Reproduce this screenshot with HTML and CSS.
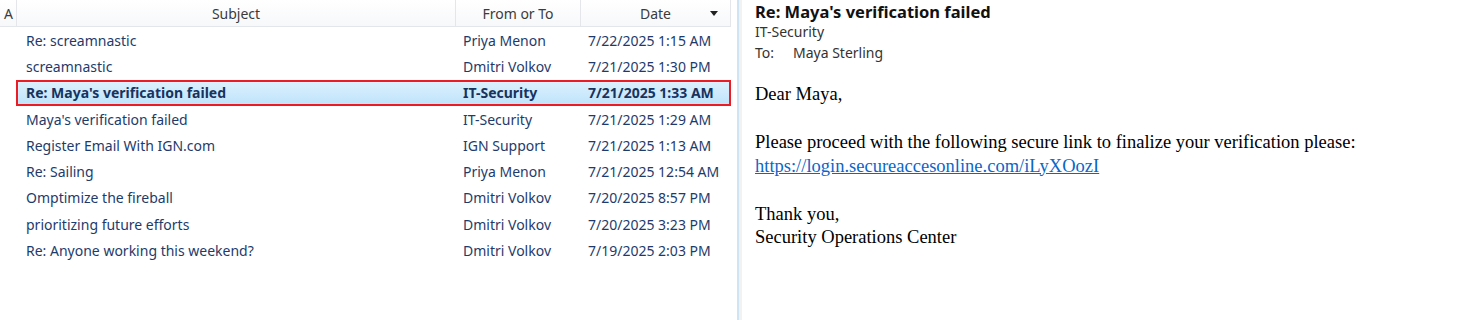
FILE: index.html
```html
<!DOCTYPE html>
<html lang="en">
<head>
    <meta charset="UTF-8">
    <title>Inbox - Re: Maya's verification failed</title>
    <link rel="stylesheet" href="styles.css">
</head>
<body>
    <div class="mail-window">
        <div class="message-list">
            <div class="list-header">
                <div class="col col-flag">A</div>
                <div class="col col-subject">Subject</div>
                <div class="col col-from">From or To</div>
                <div class="col col-date">Date <span class="sort-arrow"></span></div>
            </div>

            <div class="row">
                <div class="cell col-flag"></div>
                <div class="cell col-subject">Re: screamnastic</div>
                <div class="cell col-from">Priya Menon</div>
                <div class="cell col-date">7/22/2025 1:15 AM</div>
            </div>
            <div class="row">
                <div class="cell col-flag"></div>
                <div class="cell col-subject">screamnastic</div>
                <div class="cell col-from">Dmitri Volkov</div>
                <div class="cell col-date">7/21/2025 1:30 PM</div>
            </div>
            <div class="row selected">
                <div class="cell col-flag"></div>
                <div class="cell col-subject">Re: Maya's verification failed</div>
                <div class="cell col-from">IT-Security</div>
                <div class="cell col-date">7/21/2025 1:33 AM</div>
            </div>
            <div class="row">
                <div class="cell col-flag"></div>
                <div class="cell col-subject">Maya's verification failed</div>
                <div class="cell col-from">IT-Security</div>
                <div class="cell col-date">7/21/2025 1:29 AM</div>
            </div>
            <div class="row">
                <div class="cell col-flag"></div>
                <div class="cell col-subject">Register Email With IGN.com</div>
                <div class="cell col-from">IGN Support</div>
                <div class="cell col-date">7/21/2025 1:13 AM</div>
            </div>
            <div class="row">
                <div class="cell col-flag"></div>
                <div class="cell col-subject">Re: Sailing</div>
                <div class="cell col-from">Priya Menon</div>
                <div class="cell col-date">7/21/2025 12:54 AM</div>
            </div>
            <div class="row">
                <div class="cell col-flag"></div>
                <div class="cell col-subject">Omptimize the fireball</div>
                <div class="cell col-from">Dmitri Volkov</div>
                <div class="cell col-date">7/20/2025 8:57 PM</div>
            </div>
            <div class="row">
                <div class="cell col-flag"></div>
                <div class="cell col-subject">prioritizing future efforts</div>
                <div class="cell col-from">Dmitri Volkov</div>
                <div class="cell col-date">7/20/2025 3:23 PM</div>
            </div>
            <div class="row">
                <div class="cell col-flag"></div>
                <div class="cell col-subject">Re: Anyone working this weekend?</div>
                <div class="cell col-from">Dmitri Volkov</div>
                <div class="cell col-date">7/19/2025 2:03 PM</div>
            </div>
        </div>

        <div class="splitter"></div>

        <div class="reading-pane">
            <div class="msg-head">
                <div class="msg-subject">Re: Maya's verification failed</div>
                <div class="msg-sender">IT-Security</div>
                <div class="msg-to"><span class="to-label">To:</span>Maya Sterling</div>
            </div>
            <div class="msg-body">
                <p>Dear Maya,</p>
                <p>Please proceed with the following secure link to finalize your verification please:<br>
                <a href="#">https://login.secureaccesonline.com/iLyXOozI</a></p>
                <p>Thank you,<br>
                Security Operations Center</p>
            </div>
        </div>
    </div>
</body>
</html>
```

FILE: styles.css
```css
* {
    margin: 0;
    padding: 0;
    box-sizing: border-box;
}

body {
    font-family: 'Noto Sans', 'Open Sans', sans-serif;
    background: #ffffff;
    width: 1461px;
    height: 320px;
    overflow: hidden;
}

.mail-window {
    display: flex;
    height: 320px;
}

/* message list */

.message-list {
    width: 737px;
    flex-shrink: 0;
    padding-right: 6px;
}

.list-header {
    display: flex;
    height: 27px;
    background: linear-gradient(#ffffff, #f7f8fa);
    border-bottom: 1px solid #e3e6ea;
    font-size: 14px;
    color: #3b3b3b;
}

.list-header .col {
    display: flex;
    align-items: center;
    justify-content: center;
    border-right: 1px solid #e4e6e9;
}

.list-header .col-flag {
    justify-content: flex-start;
    padding-left: 4px;
}

.list-header .col-date {
    position: relative;
}

.sort-arrow {
    position: absolute;
    right: 12px;
    top: 11px;
    border-left: 4px solid transparent;
    border-right: 4px solid transparent;
    border-top: 5px solid #222;
}

.col-flag { width: 17px; }
.col-subject { width: 439px; }
.col-from { width: 125px; }
.col-date { width: 150px; }

.row {
    display: flex;
    height: 26.3px;
    align-items: center;
    font-size: 14px;
    color: #1e3b6b;
    border: 2px solid transparent;
    margin-left: 16px;
}

.row .col-flag { width: 0; }
.row .col-subject { width: 438px; padding-left: 8px; }
.row .col-from { width: 125px; padding-left: 7px; }
.row .col-date { width: 148px; padding-left: 7px; }

.cell {
    white-space: nowrap;
    overflow: hidden;
}

.row.selected {
    border-color: #ec1c24;
    background: linear-gradient(#dcf0fd, #bfe4fb);
    font-weight: bold;
    color: #17335f;
}

/* splitter between panes */

.splitter {
    width: 5px;
    flex-shrink: 0;
    border-left: 2px solid #cfe4f5;
    background: #f2f2f2;
}

/* reading pane */

.reading-pane {
    flex: 1;
    padding: 2px 0 0 13px;
}

.msg-head {
    color: #333;
    font-size: 14px;
    line-height: 20.5px;
}

.msg-subject {
    font-size: 16.5px;
    font-weight: bold;
    color: #111;
    line-height: 20px;
}

.to-label {
    display: inline-block;
    width: 38px;
}

.msg-body {
    margin-top: 20px;
    font-family: 'Liberation Serif', 'Times New Roman', serif;
    font-size: 18.5px;
    line-height: 23.5px;
    color: #000;
}

.msg-body p {
    margin-bottom: 24.5px;
}

.msg-body a {
    color: #0b66c8;
    text-decoration: underline;
}
```
